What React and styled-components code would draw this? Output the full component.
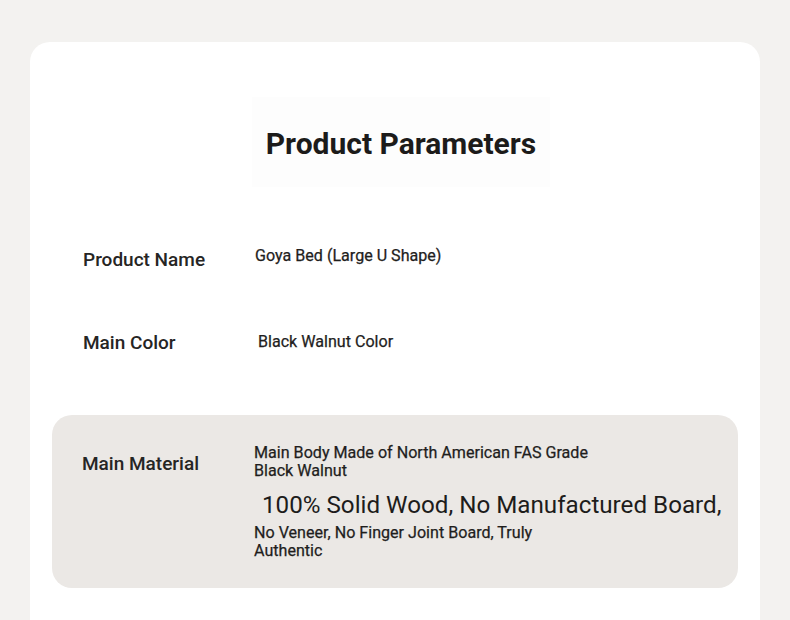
import React from "react";
import styled, { createGlobalStyle } from "styled-components";

const Global = createGlobalStyle`
  html, body { margin: 0; padding: 0; background: #f3f2f0; }
  body { font-family: Roboto, "Liberation Sans", sans-serif; color: #1f1e1d; }
`;

const Page = styled.div`
  padding: 42px 30px 0;
  height: 620px;
  box-sizing: border-box;
  overflow: hidden;
`;

const Card = styled.div`
  background: #ffffff;
  border-radius: 20px;
  padding: 55px 22px 60px;
  min-height: 640px;
  box-sizing: border-box;
`;

const TitleWrap = styled.div`
  display: flex;
  justify-content: center;
  padding-left: 12px;
`;

const Title = styled.h1`
  margin: 0;
  padding: 29px 14px 25px;
  font-size: 30px;
  font-weight: 700;
  line-height: 36px;
  background: #fdfdfd;
  color: #1c1b1a;
`;

const Rows = styled.div`
  display: flex;
  flex-direction: column;
  margin-top: 57px;
`;

const Row = styled.div`
  display: grid;
  grid-template-columns: 172px 1fr;
  align-items: ${(p) => (p.$boxed ? "start" : "center")};
  padding: ${(p) => p.$pad};
  margin-bottom: ${(p) => p.$mb || "0"};
  background: ${(p) => (p.$boxed ? "#ebe8e5" : "transparent")};
  border-radius: 20px;
`;

const Label = styled.div`
  font-size: 19px;
  font-weight: 500;
  line-height: 24px;
  padding-top: ${(p) => p.$pt || "0"};
  margin-left: ${(p) => p.$ml || "0"};
  color: #262524;
`;

const Value = styled.div`
  font-size: 16.1px;
  font-weight: 400;
  -webkit-text-stroke: 0.25px #1f1e1d;
  line-height: 18px;
  margin-left: ${(p) => p.$ml || "0"};
  margin-top: ${(p) => p.$mt || "0"};
  color: #1f1e1d;
`;

const ValueStack = styled.div`
  display: flex;
  flex-direction: column;
  padding-top: 1px;
`;

const Para = styled.p`
  margin: 0;
  font-size: 16.1px;
  font-weight: 400;
  -webkit-text-stroke: 0.25px #1f1e1d;
  line-height: 18px;
  max-width: ${(p) => p.$max || "none"};
  color: #1f1e1d;
`;

const Big = styled.p`
  margin: 10px 0 4px 8px;
  font-size: 24.2px;
  font-weight: 400;
  line-height: 30px;
  white-space: nowrap;
  color: #1d1c1b;
`;

export default function App() {
  return (
    <>
      <Global />
      <Page>
        <Card>
          <TitleWrap>
            <Title>Product Parameters</Title>
          </TitleWrap>
          <Rows>
            <Row $pad="0 31px" $mb="57px">
              <Label $pt="4px">Product Name</Label>
              <Value $mt="-4px">Goya Bed (Large U Shape)</Value>
            </Row>
            <Row $pad="0 31px" $mb="60px">
              <Label $pt="2px">Main Color</Label>
              <Value $ml="3px">Black Walnut Color</Value>
            </Row>
            <Row $boxed $pad="28px 30px 28px">
              <Label $pt="9px">Main Material</Label>
              <ValueStack>
                <Para $max="345px">Main Body Made of North American FAS Grade Black Walnut</Para>
                <Big>100% Solid Wood, No Manufactured Board,</Big>
                <Para $max="300px">No Veneer, No Finger Joint Board, Truly Authentic</Para>
              </ValueStack>
            </Row>
          </Rows>
        </Card>
      </Page>
    </>
  );
}
